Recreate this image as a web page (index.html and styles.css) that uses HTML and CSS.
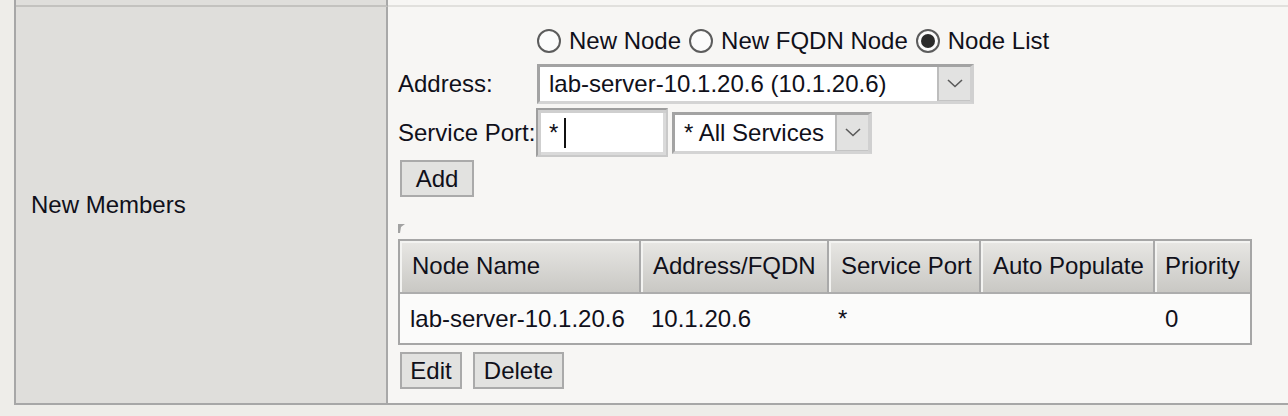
FILE: index.html
```html
<!DOCTYPE html>
<html>
<head>
<meta charset="utf-8">
<link rel="stylesheet" href="styles.css">
</head>
<body>
<div class="frame">
  <div class="row prev">
    <div class="lc"></div>
    <div class="rc"></div>
  </div>
  <div class="row main">
    <div class="lc label-cell">New Members</div>
    <div class="rc">
      <div class="form">
        <div class="flabel"></div>
        <div class="radios">
          <span class="radio"></span><span class="rtext">New Node</span>
          <span class="radio"></span><span class="rtext">New FQDN Node</span>
          <span class="radio checked"></span><span class="rtext last">Node List</span>
        </div>

        <div class="flabel addr">Address:</div>
        <div class="fctl addr">
          <div class="select wide">
            <span class="stext">lab-server-10.1.20.6 (10.1.20.6)</span>
            <span class="sbtn"><svg width="16" height="9" viewBox="0 0 16 9"><polyline points="1,1 8,7.5 15,1" fill="none" stroke="#5a5a5a" stroke-width="1.6"/></svg></span>
          </div>
        </div>

        <div class="flabel port">Service Port:</div>
        <div class="fctl port">
          <div class="input"><span>*</span><span class="caret"></span></div>
          <div class="select narrow">
            <span class="stext">* All Services</span>
            <span class="sbtn"><svg width="16" height="9" viewBox="0 0 16 9"><polyline points="1,1 8,7.5 15,1" fill="none" stroke="#5a5a5a" stroke-width="1.6"/></svg></span>
          </div>
        </div>
      </div>

      <div class="btnrow first"><span class="btn add">Add</span></div>

      <div class="grip"><svg width="8" height="9" viewBox="0 0 8 9"><polygon points="0,0 7,0 3,3 2,9 0,9" fill="#a2a2a2"/></svg></div>

      <div class="tbl">
        <div class="th">Node Name</div>
        <div class="th">Address/FQDN</div>
        <div class="th">Service Port</div>
        <div class="th">Auto Populate</div>
        <div class="th lastc">Priority</div>
        <div class="td">lab-server-10.1.20.6</div>
        <div class="td">10.1.20.6</div>
        <div class="td star">*</div>
        <div class="td"></div>
        <div class="td">0</div>
      </div>

      <div class="btnrow second">
        <span class="btn edit">Edit</span>
        <span class="btn del">Delete</span>
      </div>
    </div>
  </div>
</div>
</body>
</html>
```

FILE: styles.css
```css
html, body {
  margin: 0;
  padding: 0;
  background: #eeede9;
  font-family: "Liberation Sans", Arial, sans-serif;
  font-size: 24px;
  color: #10101a;
}

.frame {
  margin-left: 14px;
  border-left: 2px solid #a7a7a7;
  border-bottom: 2px solid #a7a7a7;
  height: 405px;
  box-sizing: border-box;
  display: flex;
  flex-direction: column;
}

.row {
  display: flex;
}

.lc {
  width: 372px;
  flex: none;
  background: #dfdedb;
  border-right: 2px solid #a8a8a8;
  box-sizing: border-box;
}

.rc {
  flex: 1;
  background: #f7f6f4;
}

.prev .lc,
.prev .rc {
  height: 7px;
  box-sizing: border-box;
}
.prev .lc { border-bottom: 2px solid #c3c2bf; }
.prev .rc { border-bottom: 2px solid #e1e0dd; }

.main { flex: 1; }

.label-cell {
  display: flex;
  align-items: center;
  padding-left: 15px;
}

.main .rc {
  padding: 21px 0 0 10px;
  box-sizing: border-box;
}

.form {
  display: grid;
  grid-template-columns: 139px auto;
  grid-auto-rows: auto;
}

.flabel {
  display: flex;
  align-items: center;
  white-space: nowrap;
}

.radios {
  display: flex;
  align-items: center;
  height: 26px;
}

.radio {
  width: 20px;
  height: 20px;
  border: 2px solid #5c5c5c;
  border-radius: 50%;
  background: #fbfbfb;
  margin-right: 8px;
  position: relative;
  flex: none;
}
.radio.checked::after {
  content: "";
  position: absolute;
  left: 3px;
  top: 3px;
  width: 14px;
  height: 14px;
  border-radius: 50%;
  background: #2a2a2a;
}

.rtext {
  margin-right: 8px;
  white-space: nowrap;
}
.rtext.last { margin-right: 0; }

.flabel.addr, .fctl.addr { margin-top: 10px; }
.flabel.port, .fctl.port { margin-top: 4px; }

.fctl {
  display: flex;
  align-items: center;
  margin-left: -1px;
}

.select {
  display: flex;
  align-items: stretch;
  background: #fff;
  border-style: solid;
  border-width: 3px 4px 3px 3px;
  border-color: #a3a3a3 #d0d0d0 #d4d4d4 #a3a3a3;
  box-sizing: border-box;
}
.select.wide {
  width: 437px;
  height: 40px;
  margin-left: 1px;
}
.select.narrow {
  width: 200px;
  height: 42px;
  margin-left: 4px;
}

.stext {
  flex: 1;
  display: flex;
  align-items: center;
  padding-left: 9px;
  white-space: nowrap;
}

.sbtn {
  width: 33px;
  flex: none;
  background: #e2e2e1;
  border-left: 2px solid #bdbdbd;
  border-bottom: 1px solid #c4c4c4;
  box-sizing: border-box;
  display: flex;
  align-items: center;
  justify-content: center;
}

.input {
  width: 132px;
  height: 49px;
  box-sizing: border-box;
  background: #fff;
  border: 2px solid;
  border-color: #9e9e9e #c9c9c9 #c9c9c9 #9e9e9e;
  box-shadow: inset 3px 3px 0 #cfcfcf, inset -3px -3px 0 #dadada;
  display: flex;
  align-items: center;
  padding-left: 11px;
}
.caret {
  width: 2px;
  height: 30px;
  background: #111;
  margin-left: 6px;
}

.btnrow {
  display: flex;
  gap: 11px;
  padding-left: 2px;
}
.btnrow.first { margin-top: 3px; }
.btnrow.second { margin-top: 7px; }

.btn {
  height: 37px;
  box-sizing: border-box;
  border: 2px solid #aaaaaa;
  background: #e2e2e0;
  display: flex;
  align-items: center;
  justify-content: center;
}
.btn.add { width: 74px; }
.btn.edit { width: 62px; }
.btn.del { width: 91px; }

.grip {
  margin-top: 27px;
  height: 8px;
  line-height: 0;
}
.grip svg { display: block; }

.tbl {
  margin-top: 7px;
  display: grid;
  grid-template-columns: 241px 188px 152px 174px 95px;
  width: max-content;
  border: 2px solid #a6a6a6;
}

.th {
  height: 53px;
  box-sizing: border-box;
  background: linear-gradient(#e8e7e4, #c9c8c4);
  border-right: 2px solid #a9a9a9;
  border-bottom: 2px solid #adadad;
  box-shadow: inset 2px 2px 0 #f3f3f1;
  display: flex;
  align-items: center;
  padding-left: 12px;
  padding-bottom: 2px;
  white-space: nowrap;
}
.th.lastc { border-right: none; padding-left: 10px; }

.td {
  height: 49px;
  background: #fbfbfa;
  display: flex;
  align-items: center;
  padding-left: 10px;
  white-space: nowrap;
}
.td.star { padding-left: 9px; }
```
